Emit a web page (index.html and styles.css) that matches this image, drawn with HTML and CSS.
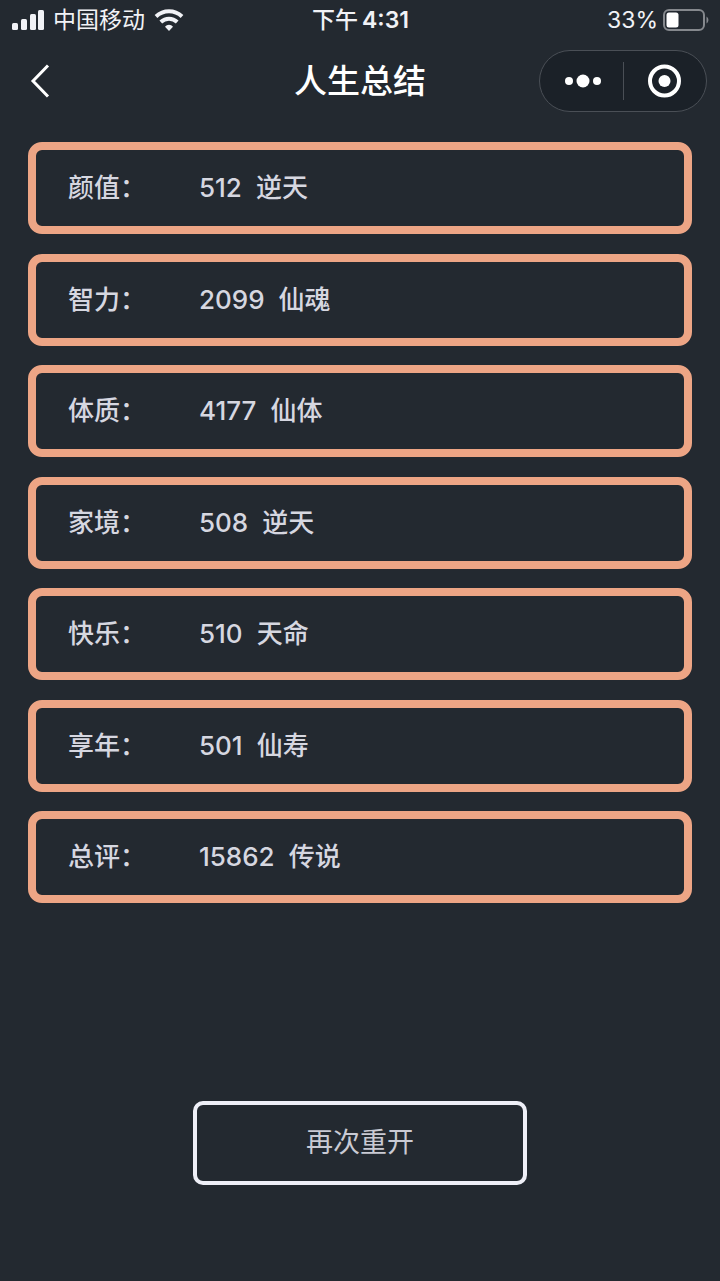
FILE: index.html
```html
<!DOCTYPE html>
<html lang="zh-CN">
<head>
<meta charset="utf-8">
<meta name="viewport" content="width=device-width, initial-scale=1">
<title>人生总结</title>
<link rel="stylesheet" href="styles.css">
</head>
<body>
<div class="app">
  <div class="status">
    <div class="status-left">
      <svg class="signal" width="32" height="20" viewBox="0 0 32 20" fill="currentColor" aria-hidden="true">
        <rect x="0" y="13" width="6" height="7" rx="1.5"/><rect x="9" y="9" width="6" height="11" rx="1.5"/><rect x="18" y="4" width="6" height="16" rx="1.5"/><rect x="26" y="0" width="6" height="20" rx="1.5"/>
      </svg>
      <span>中国移动</span>
      <svg width="30" height="22" viewBox="0 0 30 22" fill="none" stroke="currentColor" stroke-width="4" aria-hidden="true">
        <path d="M2 7.5C9.500 .6 20.500 .6 28 7.500"/><path d="M6.800 13C11.500 8.600 18.500 8.600 23.200 13"/><path d="M15 22l-4-4.200c2-2.800 6-2.800 8 0z" fill="currentColor" stroke="none"/>
      </svg>
    </div>
    <div class="clock"><span>下午</span><b>4:31</b></div>
    <div class="status-right">
      <span>33%</span>
      <svg width="46" height="22" viewBox="0 0 46 22" aria-hidden="true">
        <rect x="1" y="1" width="40" height="20" rx="5" fill="none" stroke="#85888d" stroke-width="2"/><rect x="3.500" y="3.500" width="12" height="15" rx="2.500" fill="#fff"/><path d="M43.500 7.500c2.500 1.500 2.500 5.500 0 7z" fill="#85888d"/>
      </svg>
    </div>
  </div>
  <header class="nav">
    <button class="back" type="button" aria-label="返回">
      <svg width="20" height="34" viewBox="0 0 20 34" fill="none" stroke="currentColor" stroke-width="3" aria-hidden="true"><path d="M18 1.500L3 17l15 15.500"/></svg>
    </button>
    <h1 class="title">人生总结</h1>
    <div class="capsule">
      <button class="capsule-button" type="button" aria-label="更多">
        <svg width="42" height="14" viewBox="0 0 42 14" fill="currentColor" aria-hidden="true"><circle cx="9" cy="7" r="4"/><circle cx="23" cy="7" r="6.500"/><circle cx="37" cy="7" r="4"/></svg>
      </button>
      <button class="capsule-button" type="button" aria-label="关闭">
        <svg width="34" height="34" viewBox="0 0 34 34" aria-hidden="true"><circle cx="16.500" cy="17" r="14.500" fill="none" stroke="currentColor" stroke-width="4"/><circle cx="16.500" cy="17" r="6" fill="currentColor"/></svg>
      </button>
    </div>
  </header>
  <main>
    <dl class="stats">
      <div class="stat"><dt>颜值：</dt><dd><span>512</span><span>逆天</span></dd></div>
      <div class="stat"><dt>智力：</dt><dd><span>2099</span><span>仙魂</span></dd></div>
      <div class="stat"><dt>体质：</dt><dd><span>4177</span><span>仙体</span></dd></div>
      <div class="stat"><dt>家境：</dt><dd><span>508</span><span>逆天</span></dd></div>
      <div class="stat"><dt>快乐：</dt><dd><span>510</span><span>天命</span></dd></div>
      <div class="stat"><dt>享年：</dt><dd><span>501</span><span>仙寿</span></dd></div>
      <div class="stat"><dt>总评：</dt><dd><span>15862</span><span>传说</span></dd></div>
    </dl>
    <button class="restart" type="button">再次重开</button>
  </main>
</div>
</body>
</html>
```
FILE: styles.css
```css
* { box-sizing: border-box; }

body {
  margin: 0;
  background: #232930;
  color: #fff;
  font-family: Inter, "Noto Sans CJK SC", sans-serif;
}

button {
  padding: 0;
  border: 0;
  background: none;
  color: inherit;
  font: inherit;
  cursor: pointer;
}

svg { display: block; flex: none; }

.app { min-height: 100vh; }

.status {
  display: grid;
  grid-template-columns: 1fr auto 1fr;
  align-items: center;
  height: 40px;
  padding: 0 11px 0 12px;
  font-size: 23px;
  line-height: 32px;
  color: #f1f2f6;
}

.status-left,
.status-right {
  display: flex;
  align-items: center;
  gap: 9px;
}

.status-right { justify-content: flex-end; gap: 5px; }

.clock { display: flex; gap: 4px; font-weight: 500; }
.clock b { font-weight: 600; }

.nav {
  display: grid;
  grid-template-columns: 1fr auto 1fr;
  align-items: center;
  height: 82px;
  padding: 0 13px;
}

.back { justify-self: start; margin-left: 17px; }

.title {
  margin: 0;
  font-size: 33px;
  line-height: 48px;
  font-weight: 500;
}

.capsule {
  display: flex;
  justify-self: end;
  align-items: center;
  width: 168px;
  height: 62px;
  border: 1px solid #4a4f56;
  border-radius: 31px;
  background: #1b2128;
}

.capsule-button {
  display: flex;
  flex: 1;
  align-items: center;
  justify-content: center;
  height: 38px;
}

.capsule-button + .capsule-button { border-left: 1px solid #4a4f56; }

main {
  display: flex;
  flex-direction: column;
  align-items: center;
  padding: 20px 28px 96px;
}

.stats {
  display: grid;
  align-content: space-between;
  width: 100%;
  min-height: 761px;
  margin: 0;
}

.stat {
  display: flex;
  align-items: center;
  padding: 26px 32px;
  border: 8px solid #eda585;
  border-radius: 14px;
  font-size: 26px;
  line-height: 24px;
  font-weight: 500;
  color: #d6d7e0;
}

.stat dt { width: 131px; }

.stat dd { display: flex; gap: 14px; margin: 0; }

.restart {
  width: 334px;
  height: 84px;
  margin-top: 198px;
  border: 4px solid #eeeff7;
  border-radius: 10px;
  font-size: 27px;
  line-height: 32px;
  color: #c9cad3;
}
```
